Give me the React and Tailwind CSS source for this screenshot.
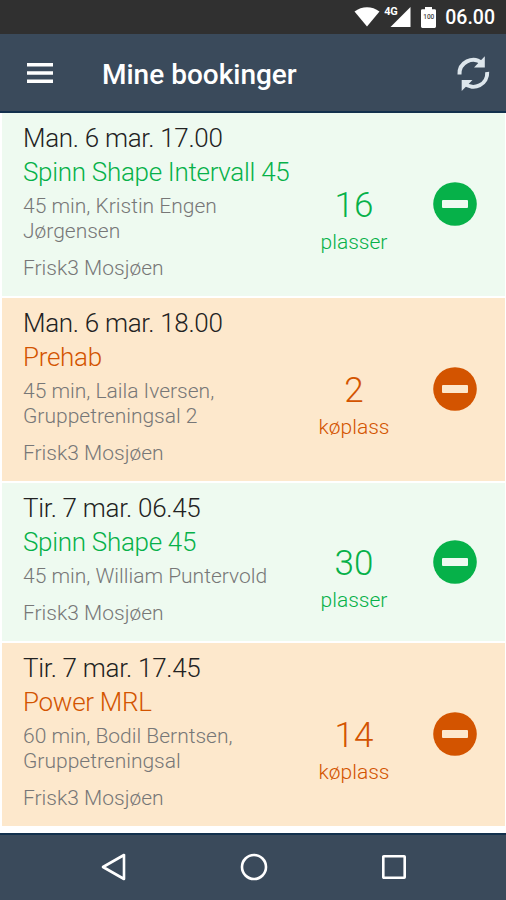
const bookings = [
  {
    time: 'Man. 6 mar. 17.00',
    name: 'Spinn Shape Intervall 45',
    details: ['45 min, Kristin Engen', 'Jørgensen'],
    location: 'Frisk3 Mosjøen',
    count: 16,
    waiting: false,
  },
  {
    time: 'Man. 6 mar. 18.00',
    name: 'Prehab',
    details: ['45 min, Laila Iversen,', 'Gruppetreningsal 2'],
    location: 'Frisk3 Mosjøen',
    count: 2,
    waiting: true,
  },
  {
    time: 'Tir. 7 mar. 06.45',
    name: 'Spinn Shape 45',
    details: ['45 min, William Puntervold'],
    location: 'Frisk3 Mosjøen',
    count: 30,
    waiting: false,
  },
  {
    time: 'Tir. 7 mar. 17.45',
    name: 'Power MRL',
    details: ['60 min, Bodil Berntsen,', 'Gruppetreningsal'],
    location: 'Frisk3 Mosjøen',
    count: 14,
    waiting: true,
  },
]

const StatusBar = () => (
  <div className="flex h-[34px] shrink-0 items-center justify-end bg-[#303030] pr-[11px] text-white">
    <svg className="h-[20px] w-[26px]" viewBox="0 0 26 20" fill="currentColor">
      <path d="M0.5 4.5C8 -1.2 18 -1.2 25.5 4.5L13 19.5z" />
    </svg>
    <div className="relative ml-[10px] h-[20px] w-[21px]">
      <svg className="h-[20px] w-[21px]" viewBox="0 0 21 20" fill="currentColor">
        <path d="M20.5 0v20H0.5z" />
      </svg>
      <span className="absolute -left-[6px] top-0 bg-[#303030] pr-px text-[11px] font-bold leading-[10px] tracking-[-0.3px]">4G</span>
    </div>
    <div className="relative ml-[10px] flex h-[21px] w-[15px] items-center justify-center">
      <svg className="absolute inset-0 h-[21px] w-[15px]" viewBox="0 0 15 21" fill="currentColor">
        <path d="M4 0h7v2.2h2.6Q15 2.2 15 3.6v16Q15 21 13.6 21H1.4Q0 21 0 19.6v-16Q0 2.2 1.4 2.2H4z" />
      </svg>
      <span className="relative text-[6.5px] font-medium leading-none text-[#444]">100</span>
    </div>
    <span className="ml-[9px] pt-[2px] text-[19.5px] font-medium leading-none">06.00</span>
  </div>
)

const Header = () => (
  <header className="flex h-[79px] shrink-0 items-center border-b-2 border-[#12304d] bg-[#3a4a5b] pl-[27px] pr-[16px] text-white">
    <svg className="h-[20px] w-[26px]" viewBox="0 0 26 20" fill="currentColor">
      <path d="M0 0h26v3.6H0zM0 8.2h26v3.6H0zM0 16.4h26V20H0z" />
    </svg>
    <h1 className="ml-[49px] flex-1 pt-[4px] text-[28px] font-medium leading-none">Mine bookinger</h1>
    <svg className="h-[36px] w-[32px] overflow-visible" viewBox="0 0 32 36" fill="none" stroke="#dde6ec" strokeWidth="4">
      <path d="M1.500 19.500A13.800 13.800 0 0 1 24 8" />
      <path d="M29.200 17A13.800 13.800 0 0 1 6.500 28.500" />
      <path d="M26.800 1.200v11.300H16z" fill="#dde6ec" stroke="none" />
      <path d="M3.700 36V25h10.800z" fill="#dde6ec" stroke="none" />
    </svg>
  </header>
)

const BookingCard = ({ booking }) => {
  const { time, name, details, location, count, waiting } = booking
  const accent = waiting ? 'text-[#d35400]' : 'text-[#06b149]'

  return (
    <div className={`flex items-center pl-[21px] pr-[28px] ${waiting ? 'bg-[#fde8cc]' : 'bg-[#eefaf0]'}`}>
      <div className="w-[280px] whitespace-nowrap pb-[15px] pt-[8px]">
        <p className="text-[26px] font-light leading-[34px] tracking-[-0.3px] text-[#222]">{time}</p>
        <p className={`text-[26px] font-light leading-[34px] tracking-[-0.3px] ${accent}`}>{name}</p>
        <div className="mt-[5px] text-[21px] font-light leading-[25px] text-[#777]">
          {details.map((line) => (
            <p key={line}>{line}</p>
          ))}
          <p className="mt-[12px]">{location}</p>
        </div>
      </div>
      <div className={`w-[102px] pt-[31px] text-center font-light ${accent}`}>
        <p className="text-[35px] leading-[41px]">{count}</p>
        <p className="mt-[4px] text-[21px] leading-[25px]">{waiting ? 'køplass' : 'plasser'}</p>
      </div>
      <button className={`mb-px ml-auto ${accent}`}>
        <svg className="h-[44px] w-[44px]" viewBox="0 0 44 44">
          <circle cx="22" cy="22" r="21.8" fill="currentColor" />
          <rect x="9" y="18" width="26" height="8" rx="1" fill={waiting ? '#fde8cc' : '#eefaf0'} />
        </svg>
      </button>
    </div>
  )
}

const NavBar = () => (
  <nav className="flex h-[67px] shrink-0 items-center justify-between border-t-2 border-[#12304d] bg-[#3a4a5b] pb-[2px] pl-[101px] pr-[99px]">
    <svg className="h-[28px] w-[25px]" viewBox="0 0 25 28" fill="none" stroke="#fff" strokeWidth="2.6" strokeLinejoin="round">
      <path d="M2 14L23 2v24z" />
    </svg>
    <svg className="h-[28px] w-[28px]" viewBox="0 0 28 28" fill="none" stroke="#fff" strokeWidth="2.6">
      <circle cx="14" cy="14" r="12" />
    </svg>
    <svg className="h-[26px] w-[26px]" viewBox="0 0 26 26" fill="none" stroke="#fff" strokeWidth="2.6">
      <rect x="2.300" y="2.300" width="21.400" height="21.400" rx="0.5" />
    </svg>
  </nav>
)

const App = () => (
  <div className="flex h-[900px] w-[506px] flex-col overflow-hidden bg-white font-[Roboto,sans-serif]">
    <StatusBar />
    <Header />
    <main className="flex flex-1 flex-col gap-[2px] bg-white pl-[2px] pr-px">
      {bookings.map((booking) => (
        <BookingCard key={booking.time} booking={booking} />
      ))}
    </main>
    <NavBar />
  </div>
)

export default App
